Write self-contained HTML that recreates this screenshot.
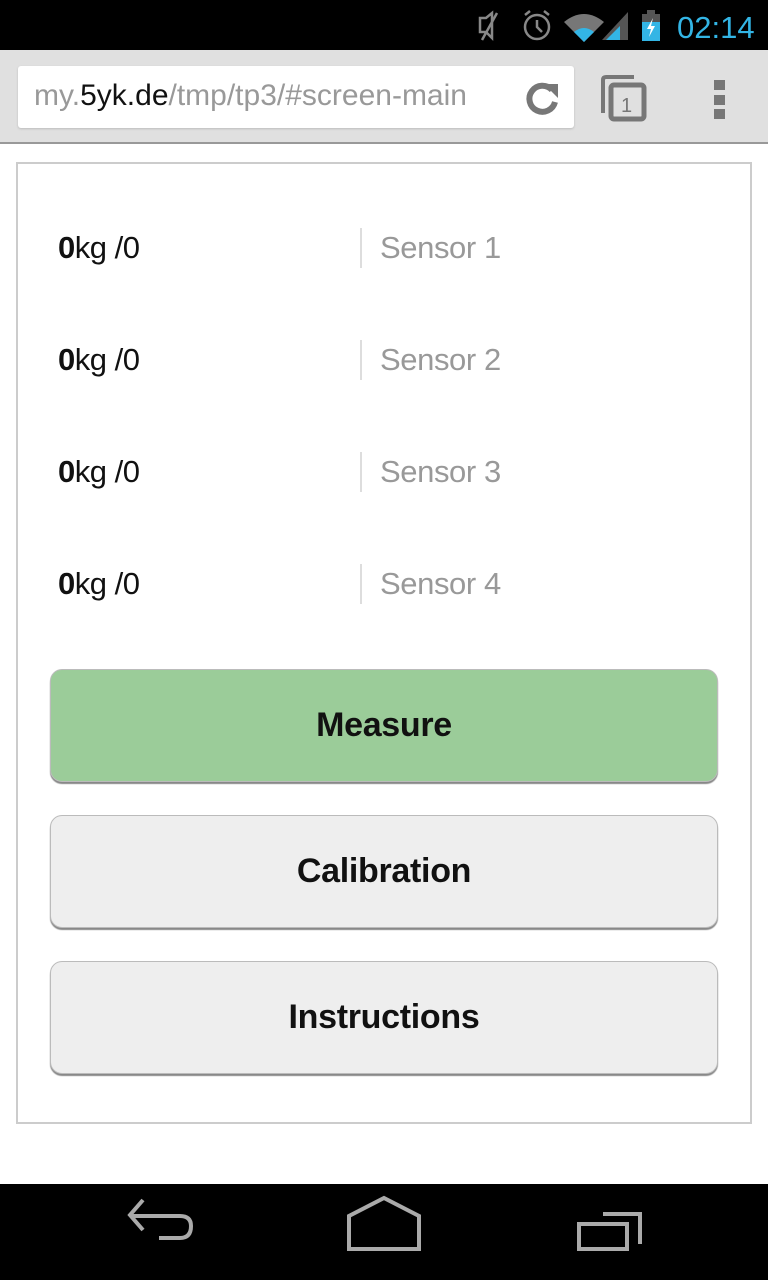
<!DOCTYPE html>
<html><head><meta charset="utf-8"><style>
*{margin:0;padding:0;box-sizing:border-box}
body{width:768px;height:1280px;background:#fff;font-family:"Liberation Sans",sans-serif;position:relative;overflow:hidden}
.abs{position:absolute}
.row{position:absolute;left:58px;font-size:31px;color:#111;letter-spacing:-0.5px}
.sen{position:absolute;left:380px;font-size:31px;color:#999;letter-spacing:-0.4px}
.div{position:absolute;left:360px;width:2px;height:40px;background:#ddd}
.btn{position:absolute;left:50px;width:668px;height:113px;border-radius:12px;border:1px solid #bbb;box-shadow:0 2px 1px #888;font-weight:bold;font-size:34px;display:flex;align-items:center;justify-content:center;color:#111;background:#eee;letter-spacing:-0.3px}
</style></head><body>
<div class="abs" style="left:0;top:0;width:768px;height:50px;background:#000"></div>
<svg class="abs" style="left:470px;top:8px" width="300" height="36" viewBox="0 0 300 36">
<g fill="none" stroke="#888" stroke-width="2.5"><path d="M10 10 L16 10 L22 5 L22 30 L16 24 L10 24Z"/><path d="M27 5 L12 32"/>
<circle cx="67" cy="19" r="12"/><path d="M67 12 L67 19 L72 24"/><path d="M55 7 L60 3 M79 7 L74 3"/></g>
<path d="M94 14 Q114 -2 134 14 L114 34Z" fill="#777"/><path d="M104 24 Q114 16 124 24 L114 34Z" fill="#33b5e5"/>
<path d="M132 32 L158 4 L158 32Z" fill="#555"/><path d="M136 32 L150 18 L150 32Z" fill="#33b5e5"/>
<rect x="172" y="6" width="18" height="27" fill="#555"/><rect x="177" y="2" width="8" height="5" fill="#555"/><rect x="172" y="14" width="18" height="19" fill="#33b5e5"/>
<path d="M183 10 L177 21 L181 21 L179 29 L185 18 L181 18Z" fill="#fff"/>
<text x="207" y="30" font-size="31" fill="#33b5e5" font-family="Liberation Sans">02:14</text></svg>
<div class="abs" style="left:0;top:50px;width:768px;height:94px;background:#e0e0e0;border-bottom:2px solid #999"></div>
<div class="abs" style="left:18px;top:66px;width:556px;height:62px;background:#fff;border-radius:3px;box-shadow:0 1px 2px #bbb"></div>
<div class="abs" style="left:34px;top:79px;font-size:30px;color:#999;letter-spacing:0px">my.<span style="color:#111">5yk.de</span>/tmp/tp3/#screen-main</div>
<svg class="abs" style="left:522px;top:78px" width="40" height="40" viewBox="0 0 40 40"><path d="M30 12 A13 13 0 1 0 33 24" fill="none" stroke="#777" stroke-width="6"/><path d="M22 6 L36 6 L36 20Z" fill="#777"/></svg>
<svg class="abs" style="left:600px;top:75px" width="48" height="48" viewBox="0 0 48 48"><path d="M3 38 V5 Q3 2 6 2 H34" fill="none" stroke="#777" stroke-width="4"/><rect x="11" y="10" width="33" height="34" rx="3" fill="none" stroke="#777" stroke-width="5"/><text x="21" y="37" font-size="20" fill="#777" font-family="Liberation Sans">1</text></svg>
<div class="abs" style="left:714px;top:80px;width:11px;height:10px;background:#777"></div>
<div class="abs" style="left:714px;top:95px;width:11px;height:10px;background:#777"></div>
<div class="abs" style="left:714px;top:109px;width:11px;height:10px;background:#777"></div>
<div class="abs" style="left:16px;top:162px;width:736px;height:962px;border:2px solid #ccc"></div>
<div class="row" style="top:230px"><b>0</b>kg /0</div><div class="div" style="top:228px"></div><div class="sen" style="top:230px">Sensor 1</div>
<div class="row" style="top:342px"><b>0</b>kg /0</div><div class="div" style="top:340px"></div><div class="sen" style="top:342px">Sensor 2</div>
<div class="row" style="top:454px"><b>0</b>kg /0</div><div class="div" style="top:452px"></div><div class="sen" style="top:454px">Sensor 3</div>
<div class="row" style="top:566px"><b>0</b>kg /0</div><div class="div" style="top:564px"></div><div class="sen" style="top:566px">Sensor 4</div>
<div class="btn" style="top:669px;background:#9bcc99">Measure</div>
<div class="btn" style="top:815px">Calibration</div>
<div class="btn" style="top:961px">Instructions</div>
<div class="abs" style="left:0;top:1184px;width:768px;height:96px;background:#000"></div>
<svg class="abs" style="left:0;top:1184px" width="768" height="96" viewBox="0 0 768 96"><g fill="none" stroke="#aaa" stroke-width="4">
<path d="M143 16 L130 31 L143 46 M130 32 H180 Q191 32 191 42 Q191 54 180 54 H159"/>
<path d="M349 65 V32 L384 14 L419 32 V65Z"/>
<path d="M579 65 V40 H627 V65Z"/><path d="M603 30 H640 V60"/></g></svg>
</body></html>
